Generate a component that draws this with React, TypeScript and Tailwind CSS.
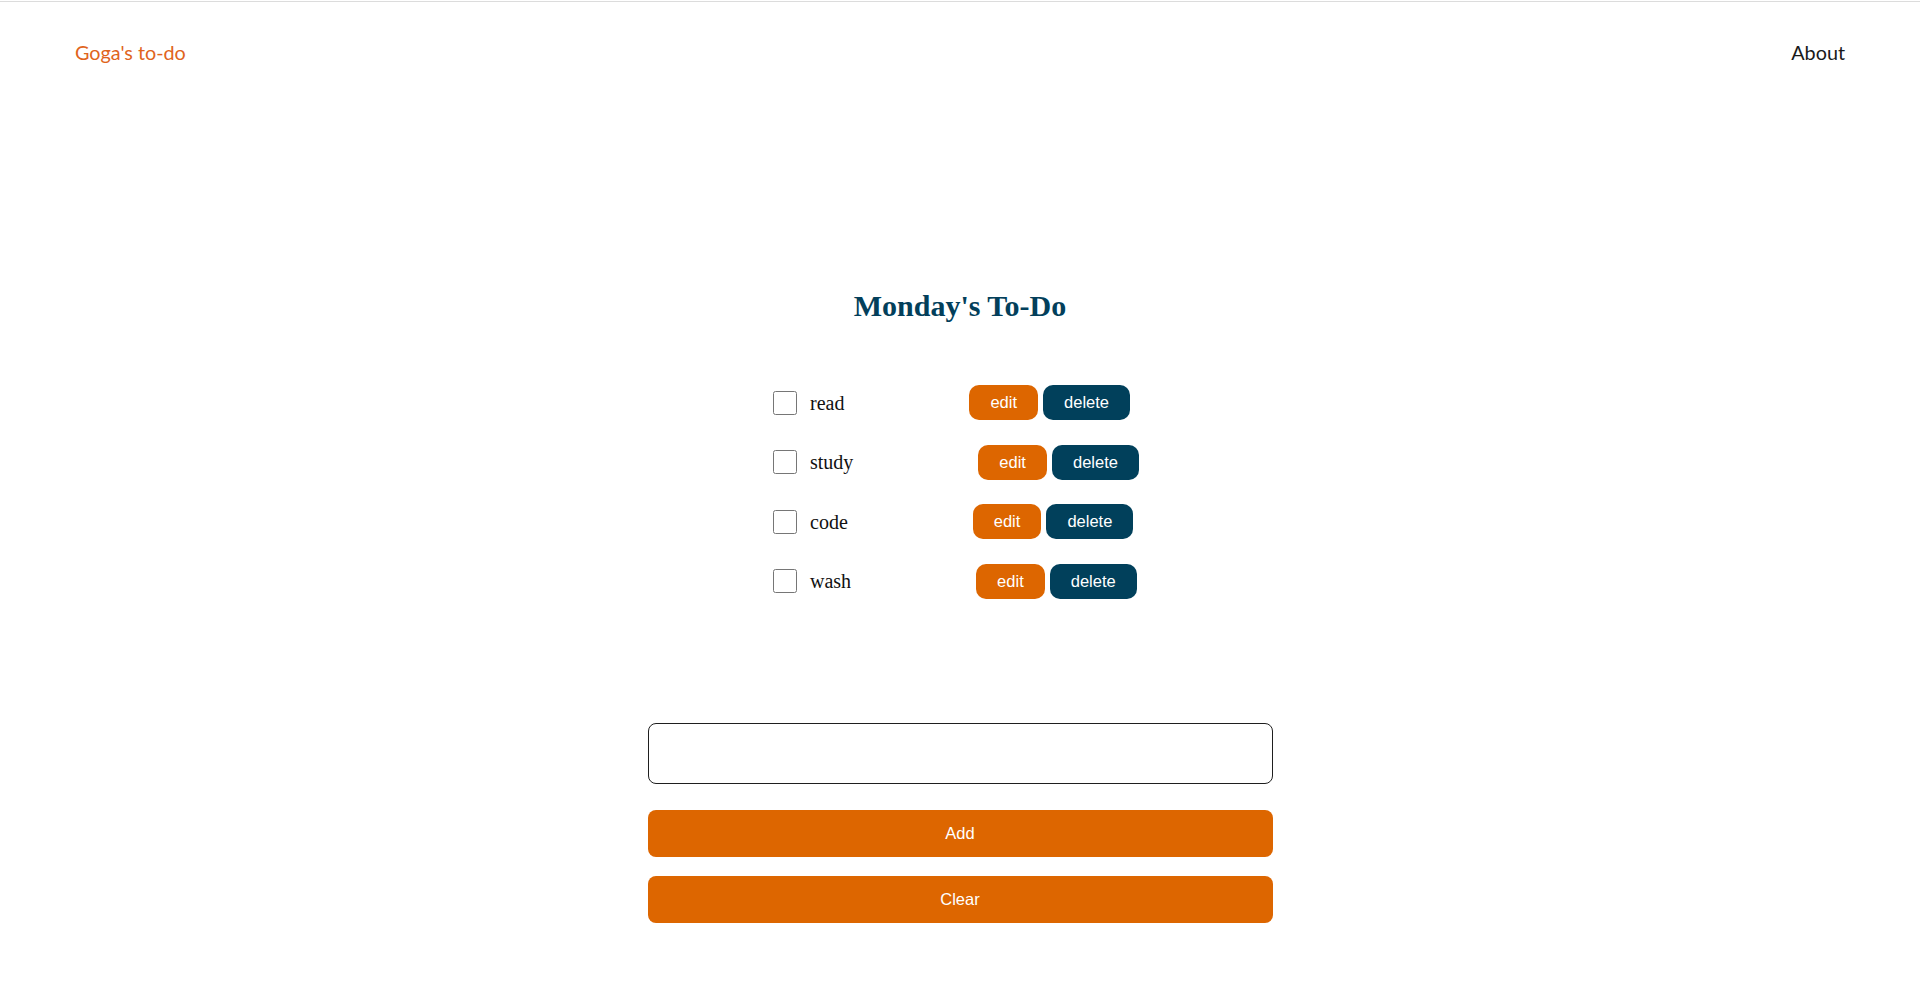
import React from "react";

const todos = ["read", "study", "code", "wash"];

export default function App() {
  return (
    <div className="min-h-[991px] bg-white">
      <div className="h-px mt-px bg-[#dcdcdc]" />
      <header className="h-[100px] flex items-center justify-between pl-[75px] pr-[75px] font-['Lato',sans-serif] text-[19.8px] leading-[24px]">
        <a className="text-[#e0641c]">Goga's to-do</a>
        <a className="text-[#1a1a1a]">About</a>
      </header>
      <main className="flex flex-col items-center">
        <h1 className="mt-[186px] font-['Liberation_Serif',serif] font-bold text-[30px] leading-[36px] text-[#033f5b]">
          Monday's To-Do
        </h1>
        <ul className="mt-[61px] w-[374px] flex flex-col gap-[24.6px]">
          {todos.map((t) => (
            <li key={t} className="h-[35px] flex items-center">
              <input type="checkbox" className="w-6 h-6 m-0" />
              <span className="ml-[13px] font-['Liberation_Serif',serif] text-[20px] text-[#111]">
                {t}
              </span>
              <div className="ml-[125px] flex gap-[5px] font-['Liberation_Sans',Arial,sans-serif] text-[16.5px] text-white">
                <button className="h-[35px] px-[21px] rounded-[10px] bg-[#dd6600]">edit</button>
                <button className="h-[35px] px-[21px] rounded-[10px] bg-[#01405b]">delete</button>
              </div>
            </li>
          ))}
        </ul>
        <input
          type="text"
          className="mt-[124px] w-[625px] h-[61px] border border-[#1f1f1f] rounded-[8px] px-3 outline-none"
        />
        <button className="mt-[26px] w-[625px] h-[47px] rounded-[8px] bg-[#dd6600] text-white font-['Liberation_Sans',Arial,sans-serif] text-[16.5px]">
          Add
        </button>
        <button className="mt-[19px] w-[625px] h-[47px] rounded-[8px] bg-[#dd6600] text-white font-['Liberation_Sans',Arial,sans-serif] text-[16.5px]">
          Clear
        </button>
      </main>
    </div>
  );
}
